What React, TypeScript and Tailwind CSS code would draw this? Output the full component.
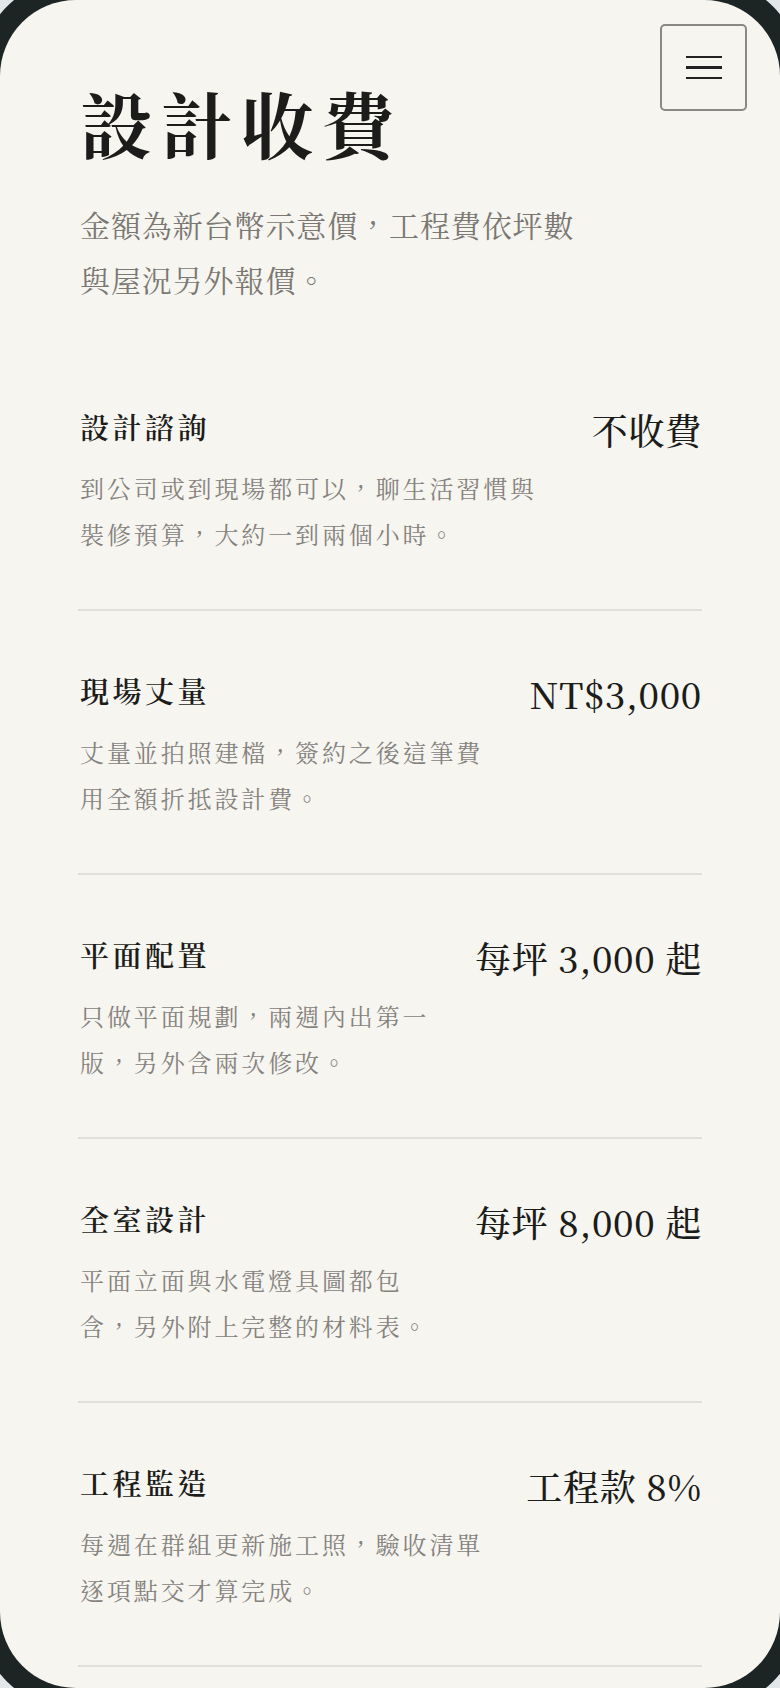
const items = [
  {
    title: '設計諮詢',
    price: '不收費',
    desc: '到公司或到現場都可以，聊生活習慣與裝修預算，大約一到兩個小時。',
  },
  {
    title: '現場丈量',
    price: 'NT$3,000',
    desc: '丈量並拍照建檔，簽約之後這筆費用全額折抵設計費。',
  },
  {
    title: '平面配置',
    price: '每坪 3,000 起',
    desc: '只做平面規劃，兩週內出第一版，另外含兩次修改。',
  },
  {
    title: '全室設計',
    price: '每坪 8,000 起',
    desc: '平面立面與水電燈具圖都包含，另外附上完整的材料表。',
  },
  {
    title: '工程監造',
    price: '工程款 8%',
    desc: '每週在群組更新施工照，驗收清單逐項點交才算完成。',
  },
];

function MenuButton() {
  return (
    <button
      type="button"
      aria-label="選單"
      className="absolute right-[33px] top-[24px] flex h-[87px] w-[87px] flex-col items-center justify-center gap-[8px] rounded-[5px] border-2 border-[#8b8884] bg-[#f6f5f0]"
    >
      <span className="h-[2.5px] w-[36px] bg-[#222]" />
      <span className="h-[2.5px] w-[36px] bg-[#222]" />
      <span className="h-[2.5px] w-[36px] bg-[#222]" />
    </button>
  );
}

export default function App() {
  return (
    <div
      lang="zh-Hant"
      className="h-[1688px] overflow-hidden bg-[#e3e7ea] font-['Noto_Serif_CJK_TC','Noto_Serif_TC',serif,'Noto_Sans_CJK_TC']"
    >
      <div className="-m-[22px] rounded-[98px] bg-[#1c2424] p-[22px]">
        <div className="relative h-[1688px] overflow-hidden rounded-[76px] bg-[#f6f5f0] text-[#1c1c1a]">
          <MenuButton />
          <main className="px-[78px] pt-[79px]">
            <h1 className="pl-[2px] text-[72px] font-bold leading-[86px] tracking-[0.12em]">設計收費</h1>
            <p className="mt-[32px] max-w-[512px] pl-[2px] text-[30px] leading-[55px] tracking-[0.03em] text-[#7b7873]">
              金額為新台幣示意價，工程費依坪數與屋況另外報價。
            </p>

            <ul className="mt-[40px]">
              {items.map((item) => (
                <li key={item.title} className="border-b-2 border-[#e1dfda] pb-[52px] pt-[56px]">
                  <div className="flex items-start justify-between gap-[40px] pl-[2px]">
                    <div className="min-w-0 flex-1">
                      <h2 className="text-[29px] font-semibold leading-[47px] tracking-[0.12em]">{item.title}</h2>
                      <p className="mt-[15px] text-[24px] leading-[46px] tracking-[0.12em] text-[#85827d]">
                        {item.desc}
                      </p>
                    </div>
                    <div className="shrink-0 pt-[3px] text-[36px] font-medium leading-[47px] tracking-[0.02em]">
                      {item.price}
                    </div>
                  </div>
                </li>
              ))}
            </ul>
          </main>
        </div>
      </div>
    </div>
  );
}
